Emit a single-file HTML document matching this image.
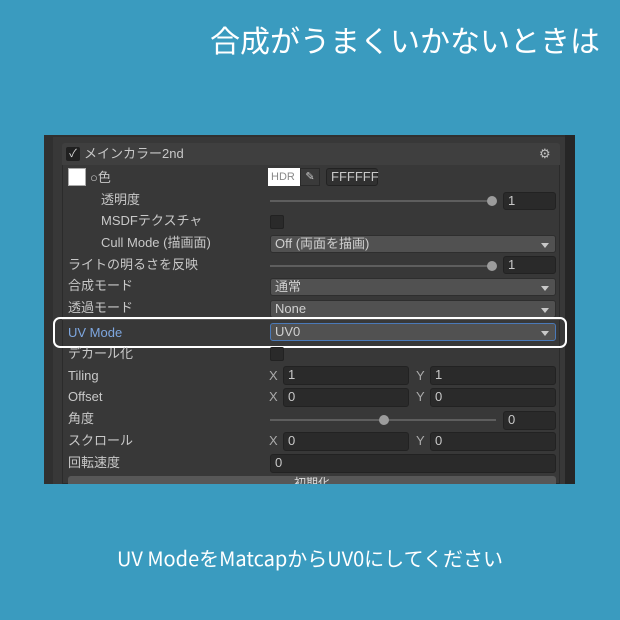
<!DOCTYPE html><html><head><meta charset="utf-8"><style>
*{margin:0;padding:0;box-sizing:border-box}
body{width:620px;height:620px;background:#3a9bbf;position:relative;overflow:hidden;font-family:"Liberation Sans","Noto Sans CJK JP",sans-serif}
.a{position:absolute}
.t{position:absolute;color:#c8c8c8;font-size:13px;line-height:16px;white-space:nowrap}
.f{position:absolute;background:#2a2a2a;border:1px solid #222;border-radius:3px;color:#c8c8c8;font-size:13px;line-height:16px;padding-left:4px}
.d{position:absolute;background:#515151;border:1px solid #2e2e2e;border-radius:3px;color:#d0d0d0;font-size:13px;line-height:16px;padding-left:4px;height:18px}
.d:after{content:"";position:absolute;right:6px;top:7px;border-left:4px solid transparent;border-right:4px solid transparent;border-top:5px solid #c8c8c8}
.sl{position:absolute;height:2px;background:#5e5e5e}
.k{position:absolute;width:10px;height:10px;border-radius:50%;background:#9c9c9c}
.cb{position:absolute;width:14px;height:14px;background:#2a2a2a;border:1px solid #222;border-radius:2px}
</style></head><body>
<div class="a" style="left:0;top:19px;width:600px;text-align:right;color:#fff;font-size:30px;line-height:40px;font-family:'Noto Sans CJK JP',sans-serif">合成がうまくいかないときは</div>
<div class="a" style="left:44px;top:135px;width:531px;height:349px;background:#303030"></div>
<div class="a" style="left:53px;top:137px;width:512px;height:347px;background:#383838"></div>
<div class="a" style="left:565px;top:135px;width:10px;height:349px;background:#262626"></div>
<div class="a" style="left:62px;top:143px;width:498px;height:22px;background:#3f3f3f;border-radius:3px 3px 0 0"></div>
<div class="a" style="left:62px;top:165px;width:498px;height:319px;border:1px solid #2b2b2b;border-top:none"></div>
<div class="a" style="left:66px;top:147px;width:14px;height:14px;background:#202020;border-radius:2px;color:#ddd;font-size:11px;line-height:14px;text-align:center">✓</div>
<div class="t" style="left:84px;top:146px">メインカラー2nd</div>
<div class="t" style="left:539px;top:146px;color:#c0c0c0">⚙</div>
<div class="a" style="left:68px;top:168px;width:18px;height:18px;background:#fff;border:1px solid #aaa"></div>
<div class="t" style="left:90px;top:170px">○色</div>
<div class="a" style="left:268px;top:168px;width:32px;height:18px;background:#fff;color:#888;font-size:11px;line-height:18px;padding-left:3px">HDR</div>
<div class="a" style="left:300px;top:168px;width:20px;height:18px;background:#3a3a3a;border:1px solid #2a2a2a;color:#ccc;font-size:11px;text-align:center;line-height:16px">✎</div>
<div class="f" style="left:326px;top:168px;width:52px;height:18px;background:#303030">FFFFFF</div>
<div class="t" style="left:101px;top:192px">透明度</div>
<div class="sl" style="left:270px;top:200px;width:222px"></div><div class="k" style="left:487px;top:196px"></div>
<div class="f" style="left:503px;top:192px;width:53px;height:18px">1</div>
<div class="t" style="left:101px;top:213px">MSDFテクスチャ</div>
<div class="cb" style="left:270px;top:215px"></div>
<div class="t" style="left:101px;top:235px">Cull Mode (描画面)</div>
<div class="d" style="left:270px;top:235px;width:286px">Off (両面を描画)</div>
<div class="t" style="left:68px;top:257px">ライトの明るさを反映</div>
<div class="sl" style="left:270px;top:265px;width:222px"></div><div class="k" style="left:487px;top:261px"></div>
<div class="f" style="left:503px;top:256px;width:53px;height:18px">1</div>
<div class="t" style="left:68px;top:278px">合成モード</div>
<div class="d" style="left:270px;top:278px;width:286px">通常</div>
<div class="t" style="left:68px;top:300px">透過モード</div>
<div class="d" style="left:270px;top:300px;width:286px">None</div>
<div class="a" style="left:62px;top:319px;width:498px;height:1px;background:#555"></div>
<div class="t" style="left:68px;top:325px;color:#7ea7e0">UV Mode</div>
<div class="d" style="left:270px;top:323px;width:286px;border-color:#4a79b8">UV0</div>
<div class="a" style="left:53px;top:317px;width:514px;height:31px;border:2px solid #fff;border-radius:7px"></div>
<div class="t" style="left:68px;top:346px">デカール化</div>
<div class="cb" style="left:270px;top:347px"></div>
<div class="t" style="left:68px;top:368px">Tiling</div>
<div class="t" style="left:269px;top:368px;color:#aaa">X</div><div class="f" style="left:283px;top:366px;width:126px;height:19px">1</div>
<div class="t" style="left:416px;top:368px;color:#aaa">Y</div><div class="f" style="left:430px;top:366px;width:126px;height:19px">1</div>
<div class="t" style="left:68px;top:389px">Offset</div>
<div class="t" style="left:269px;top:389px;color:#aaa">X</div><div class="f" style="left:283px;top:388px;width:126px;height:19px">0</div>
<div class="t" style="left:416px;top:389px;color:#aaa">Y</div><div class="f" style="left:430px;top:388px;width:126px;height:19px">0</div>
<div class="t" style="left:68px;top:411px">角度</div>
<div class="sl" style="left:270px;top:419px;width:226px"></div><div class="k" style="left:379px;top:415px"></div>
<div class="f" style="left:503px;top:411px;width:53px;height:19px">0</div>
<div class="t" style="left:68px;top:433px">スクロール</div>
<div class="t" style="left:269px;top:433px;color:#aaa">X</div><div class="f" style="left:283px;top:432px;width:126px;height:19px">0</div>
<div class="t" style="left:416px;top:433px;color:#aaa">Y</div><div class="f" style="left:430px;top:432px;width:126px;height:19px">0</div>
<div class="t" style="left:68px;top:455px">回転速度</div>
<div class="f" style="left:270px;top:454px;width:286px;height:19px">0</div>
<div class="a" style="left:68px;top:476px;width:488px;height:10px;background:#575757;border-radius:3px 3px 0 0;color:#ddd;font-size:12px;line-height:16px;text-align:center;overflow:hidden"><span style="position:relative;top:-1px">初期化</span></div>
<div class="a" style="left:0;top:484px;width:620px;height:136px;background:#3a9bbf"></div>
<div class="a" style="left:0;top:544px;width:620px;text-align:center;color:#fff;font-size:20px;line-height:28px;font-family:'Noto Sans CJK JP',sans-serif">UV ModeをMatcapからUV0にしてください</div>
</body></html>
